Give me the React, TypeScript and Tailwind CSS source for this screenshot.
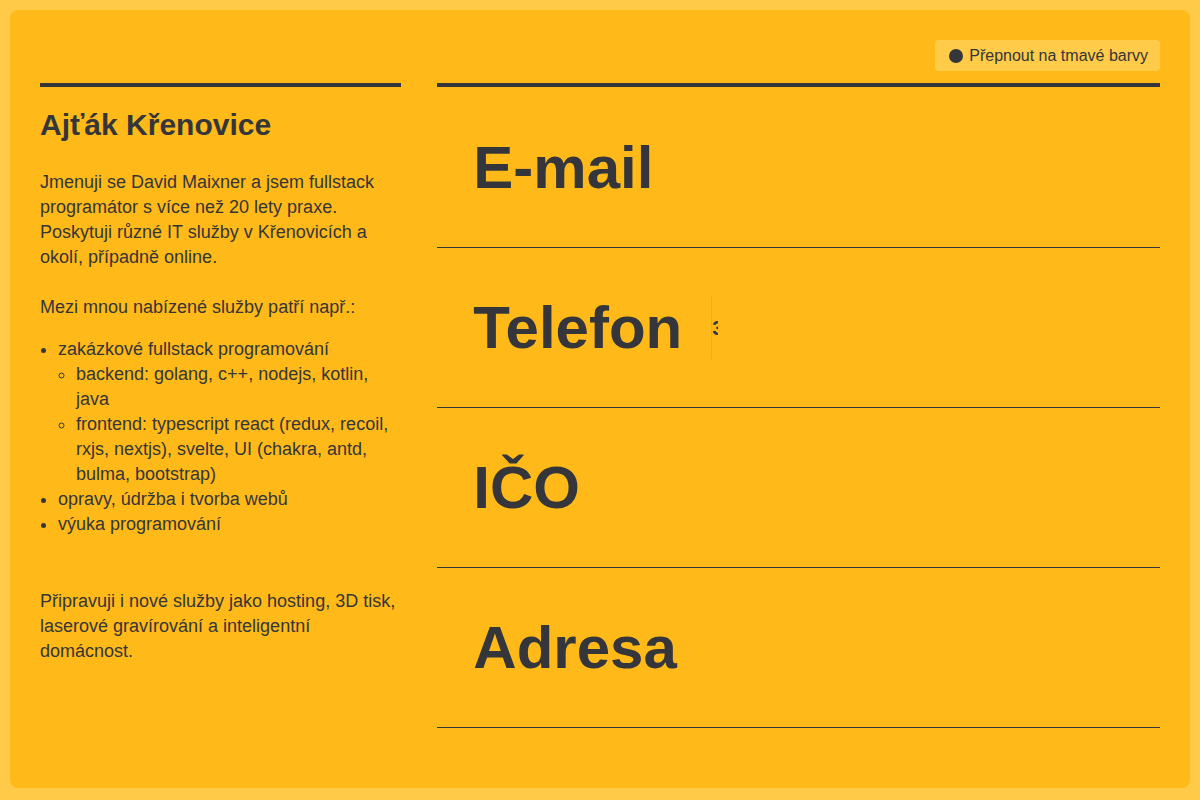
import React from "react";

const contacts = ["E-mail", "Telefon", "IČO", "Adresa"];

export default function App() {
  return (
    <div
      className="min-h-screen w-full bg-[#ffca48] p-[10px] text-[#34363b]"
      style={{ fontFamily: '"Liberation Sans", Arial, sans-serif' }}
    >
      <div className="h-[778px] rounded-[8px] bg-[#ffb919] px-[30px] pt-[30px]">
        <div className="flex justify-end">
          <button className="flex h-[31px] items-center gap-[6px] rounded-[4px] bg-[#ffcb48] pl-[14px] pr-[12px] text-[16px] text-[#34363b]">
            <span className="inline-block h-[14px] w-[14px] rounded-full bg-[#34363b]" />
            Přepnout na tmavé barvy
          </button>
        </div>

        <div className="mt-[12px] grid grid-cols-[1fr_2fr] gap-x-[36px]">
          <section className="border-t-4 border-[#34363b]">
            <h1 className="mt-[20px] text-[30px] font-bold leading-[36px]">Ajťák Křenovice</h1>
            <div className="mt-[27px] text-[18px] leading-[25px]">
              <p>
                Jmenuji se David Maixner a jsem fullstack programátor s více než 20 lety praxe. Poskytuji různé IT
                služby v Křenovicích a okolí, případně online.
              </p>
              <p className="mt-[25px]">Mezi mnou nabízené služby patří např.:</p>
              <ul className="mt-[17px] list-disc pl-[18px]">
                <li>
                  zakázkové fullstack programování
                  <ul className="list-[circle] pl-[18px]">
                    <li>backend: golang, c++, nodejs, kotlin, java</li>
                    <li>frontend: typescript react (redux, recoil, rxjs, nextjs), svelte, UI (chakra, antd, bulma, bootstrap)</li>
                  </ul>
                </li>
                <li>opravy, údržba i tvorba webů</li>
                <li>výuka programování</li>
              </ul>
              <p className="mt-[52px] pr-[4px]">
                Připravuji i nové služby jako hosting, 3D tisk, laserové gravírování a inteligentní domácnost.
              </p>
            </div>
          </section>

          <section className="border-t-4 border-[#34363b] pt-[1px]">
            {contacts.map((label) => (
              <div
                key={label}
                className="flex h-[160px] items-center border-b border-[#34363b] pl-[36px]"
              >
                <h2 className="text-[60px] font-bold leading-none">{label}</h2>
                {label === "Telefon" && (
                  <div className="ml-[29px] flex h-[63px] items-center border-l border-[#f2ad10]">
                    <span className="inline-block w-[6px] overflow-hidden text-[20px] font-bold leading-none">3</span>
                  </div>
                )}
              </div>
            ))}
          </section>
        </div>
      </div>
    </div>
  );
}
